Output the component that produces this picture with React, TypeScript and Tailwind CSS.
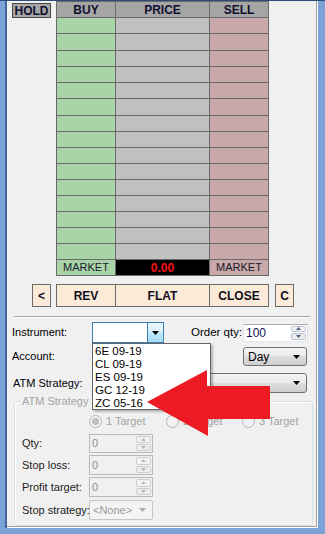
import React from "react";

const ROWS = Array.from({ length: 15 });
const ITEMS = ["6E 09-19", "CL 09-19", "ES 09-19", "GC 12-19", "ZC 05-16"];

function DownTri({ color = "#000" }: { color?: string }) {
  return (
    <svg width="7" height="4" viewBox="0 0 7 4" className="block">
      <path d="M0 0h7L3.5 4z" fill={color} />
    </svg>
  );
}

function SpinButtons({ disabled }: { disabled?: boolean }) {
  const arrow = disabled ? "#b8b8b8" : "#4c607e";
  const border = disabled ? "border-[#cfcfcf]" : "border-[#b9c4d4]";
  return (
    <div className="ml-auto mr-px flex h-full w-[15px] flex-col gap-px py-px">
      <div className={`flex flex-1 items-center justify-center rounded-[2px] border ${border} bg-[#f3f3f3]`}>
        <svg width="5" height="3" viewBox="0 0 5 3"><path d="M0 3h5L2.5 0z" fill={arrow} /></svg>
      </div>
      <div className={`flex flex-1 items-center justify-center rounded-[2px] border ${border} bg-[#ececec]`}>
        <svg width="5" height="3" viewBox="0 0 5 3"><path d="M0 0h5L2.5 3z" fill={arrow} /></svg>
      </div>
    </div>
  );
}

function Radio({ checked, label, width }: { checked?: boolean; label: string; width: string }) {
  return (
    <div className={`flex items-center ${width}`}>
      <span className="flex size-[13px] items-center justify-center rounded-full border border-[#b4b4b4] bg-[#f2f2f2]">
        {checked && <span className="size-[7px] rounded-full border border-[#b0b0b0] bg-[#c4c4c4]" />}
      </span>
      <span className="ml-[4px] text-[11px] text-[#a3a3a3]">{label}</span>
    </div>
  );
}

function ParamRow({ label, children, mt }: { label: string; children: React.ReactNode; mt: string }) {
  return (
    <div className={`flex h-[20px] items-center ${mt}`}>
      <span className="ml-[7px] w-[67px] whitespace-nowrap text-[#222]">{label}</span>
      {children}
    </div>
  );
}

function DisabledSpin() {
  return (
    <div className="flex h-full w-[64px] items-center border border-[#b9b9b9] bg-[#f0f0f0]">
      <span className="ml-[2px] text-[#8c8c8c]">0</span>
      <SpinButtons disabled />
    </div>
  );
}

export default function App() {
  return (
    <div className="relative h-[534px] w-[325px] overflow-hidden border-t border-[#2f4c78] bg-[#7ba3d8] pl-[5px] font-['Liberation_Sans',Arial,sans-serif] text-[11px] leading-none text-black">
      <div className="relative flex h-[527px] w-[313px] flex-col border-l-2 border-[#43679c] bg-[#f0f0f0] shadow-[inset_-1px_-1px_0_#fff,inset_-2px_-2px_0_#a0a0a0]">
        {/* ladder */}
        <div className="flex items-start">
          <div className="ml-[5px] mt-[2px] flex h-[15px] w-[39px] items-center justify-center border border-[#4a4a4a] bg-[#a5a5a5] text-[12px] font-bold text-[#101030]">
            HOLD
          </div>
          <div className="ml-[5px] grid grid-cols-[58px_93px_58px] grid-rows-[15px_15px_16px_15px_15px_15px_16px_15px_15px_15px_15px_15px_15px_15px_15px_15px_15px] gap-px bg-[#6a6a6a] p-px">
            <div className="flex items-center justify-center bg-[#a5a5a5] text-[12px] font-bold text-[#101030]">BUY</div>
            <div className="flex items-center justify-center bg-[#a5a5a5] text-[12px] font-bold text-[#101030]">PRICE</div>
            <div className="flex items-center justify-center bg-[#a5a5a5] text-[12px] font-bold text-[#101030]">SELL</div>
            {ROWS.map((_, i) => (
              <React.Fragment key={i}>
                <div className="bg-[#a9d4a8]" />
                <div className="bg-[#c0c0c0]" />
                <div className="bg-[#c9a8a9]" />
              </React.Fragment>
            ))}
            <div className="flex items-center justify-center bg-[#a9d4a8] text-[#1a1a2a]">MARKET</div>
            <div className="flex items-center justify-center bg-black text-[12px] font-bold text-[#ff1010]">0.00</div>
            <div className="flex items-center justify-center bg-[#c9a8a9] text-[#1a1a2a]">MARKET</div>
          </div>
        </div>

        {/* order buttons */}
        <div className="mt-[8px] flex h-[23px] text-[12px] font-bold text-[#101020]">
          <div className="ml-[25px] flex w-[19px] items-center justify-center border border-[#6a6a6a] bg-[#fbead7]">&lt;</div>
          <div className="ml-[5px] grid w-[213px] grid-cols-[58px_93px_58px] gap-px bg-[#6a6a6a] p-px">
            <div className="flex items-center justify-center bg-[#fbead7]">REV</div>
            <div className="flex items-center justify-center bg-[#fbead7]">FLAT</div>
            <div className="flex items-center justify-center bg-[#fbead7]">CLOSE</div>
          </div>
          <div className="ml-[6px] flex w-[19px] items-center justify-center border border-[#6a6a6a] bg-[#fbead7]">C</div>
        </div>

        <div className="ml-[7px] mt-[9px] h-[2px] w-[296px] border-t border-b border-t-[#a0a0a0] border-b-white" />

        {/* instrument / qty */}
        <div className="mt-[4px] flex h-[21px] items-center">
          <span className="ml-[5px] w-[80px]">Instrument:</span>
          <div className="flex h-full w-[72px] border border-[#3c7fb1] bg-white">
            <div className="ml-auto flex w-[16px] items-center justify-center border-l border-[#3c7fb1] bg-[linear-gradient(#eaf6fd,#d9f0fc_50%,#bee6fd_50%,#a7d9f5)]">
              <DownTri />
            </div>
          </div>
          <span className="ml-[27px] w-[52px] text-[11.5px]">Order qty:</span>
          <div className="flex h-[18px] w-[65px] items-center border border-[#abadb3] border-l-[#e2e3ea] border-b-[#e3e9ef] border-r-[#dbdfe6] bg-white">
            <span className="ml-[2px] text-[12px] text-[#1a1050]">100</span>
            <SpinButtons />
          </div>
        </div>

        {/* account */}
        <div className="mt-[4px] flex h-[19px] items-center">
          <span className="ml-[5px]">Account:</span>
          <div className="ml-auto mr-[11px] flex h-full w-[64px] items-center rounded-[3px] border border-[#707070] bg-[linear-gradient(#f2f2f2,#ebebeb_50%,#dddddd_50%,#cfcfcf)]">
            <span className="ml-[4px] text-[12px]">Day</span>
            <span className="ml-auto mr-[6px]"><DownTri /></span>
          </div>
        </div>

        {/* atm strategy */}
        <div className="mt-[7px] flex h-[20px] items-center">
          <span className="ml-[6px] w-[79px]">ATM Strategy:</span>
          <div className="ml-[0px] mr-[11px] flex h-full flex-1 items-center rounded-[3px] border border-[#707070] bg-[linear-gradient(#f2f2f2,#ebebeb_50%,#dddddd_50%,#cfcfcf)]">
            <span className="ml-auto mr-[6px]"><DownTri /></span>
          </div>
        </div>

        {/* atm strategy parameters */}
        <div className="relative ml-[7px] mt-[8px] h-[125px] w-[299px] rounded-[3px] border border-[#d5dfe5] shadow-[inset_1px_1px_0_#fff]">
          <span className="absolute -top-[6px] left-[5px] bg-[#f0f0f0] px-[2px] text-[11px] text-[#a3a3a3]">ATM Strategy parameters</span>
          <div className="ml-[74px] mt-[13px] flex h-[13px] items-center">
            <Radio checked label="1 Target" width="w-[77px]" />
            <Radio label="2 Target" width="w-[76px]" />
            <Radio label="3 Target" width="w-[70px]" />
          </div>
          <div className="mt-[6px] flex h-[19px] items-center">
            <span className="ml-[7px] w-[67px] text-[#222]">Qty:</span>
            <DisabledSpin />
          </div>
          <ParamRow label="Stop loss:" mt="mt-[2px]">
            <DisabledSpin />
          </ParamRow>
          <ParamRow label="Profit target:" mt="mt-[2px]">
            <DisabledSpin />
          </ParamRow>
          <ParamRow label="Stop strategy:" mt="mt-[3px]">
            <div className="flex h-full w-[64px] items-center rounded-[2px] border border-[#c4c4c4] bg-[#f4f4f4]">
              <span className="ml-[3px] text-[#9a9a9a]">&lt;None&gt;</span>
              <span className="ml-auto mr-[6px]"><DownTri color="#b0b0b0" /></span>
            </div>
          </ParamRow>
        </div>

        {/* open instrument list */}
        <div className="absolute left-[85px] top-[342px] h-[67px] w-[119px] border border-[#646464] bg-white pt-px shadow-[2px_2px_2px_rgba(0,0,0,0.25)]">
          {ITEMS.map((it) => (
            <div key={it} className="flex h-[13px] items-center pl-[2px] text-[11.5px]">{it}</div>
          ))}
        </div>
      </div>

      {/* red pointer arrow */}
      <svg className="pointer-events-none absolute left-0 top-0" width="325" height="534" viewBox="0 0 325 534">
        <polygon points="147,401 207,369 207,385 270,385 270,418 208,418 208,435" fill="#ed1c24" />
      </svg>
    </div>
  );
}
